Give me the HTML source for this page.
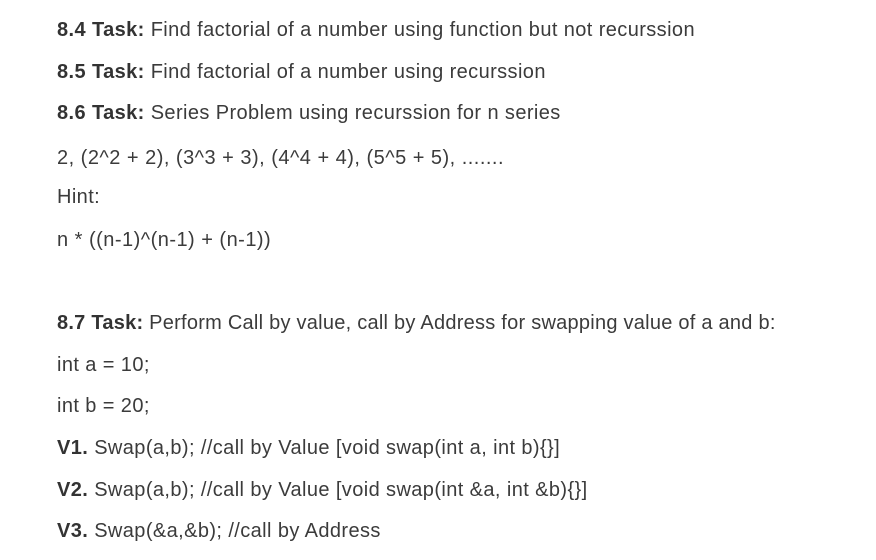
<!DOCTYPE html>
<html><head><meta charset="utf-8"><style>
body{margin:0;width:876px;height:560px;background:#fff;overflow:hidden;font-family:"Liberation Sans",sans-serif;color:#3b3b3b;font-size:20px}
p{position:absolute;left:57px;margin:0;line-height:22px;white-space:nowrap;letter-spacing:0.4px}
b{color:#333}
.s{letter-spacing:0.48px}
</style></head><body>
<p style="top:19px"><b>8.4 Task:</b> Find factorial of a number using function but not recurssion</p>
<p style="top:61px"><b>8.5 Task:</b> Find factorial of a number using recurssion</p>
<p style="top:102px"><b>8.6 Task:</b> Series Problem using recurssion for n series</p>
<p class="s" style="top:147px">2, (2^2 + 2), (3^3 + 3), (4^4 + 4), (5^5 + 5), .......</p>
<p style="top:186px">Hint:</p>
<p class="s" style="top:229px">n * ((n-1)^(n-1) + (n-1))</p>
<p style="top:312px;letter-spacing:0.25px"><b>8.7 Task:</b> Perform Call by value, call by Address for swapping value of a and b:</p>
<p style="top:354px">int a = 10;</p>
<p style="top:395px">int b = 20;</p>
<p style="top:437px"><b>V1.</b> Swap(a,b); //call by Value [void swap(int a, int b){}]</p>
<p style="top:479px"><b>V2.</b> Swap(a,b); //call by Value [void swap(int &amp;a, int &amp;b){}]</p>
<p style="top:520px"><b>V3.</b> Swap(&amp;a,&amp;b); //call by Address</p>
</body></html>
